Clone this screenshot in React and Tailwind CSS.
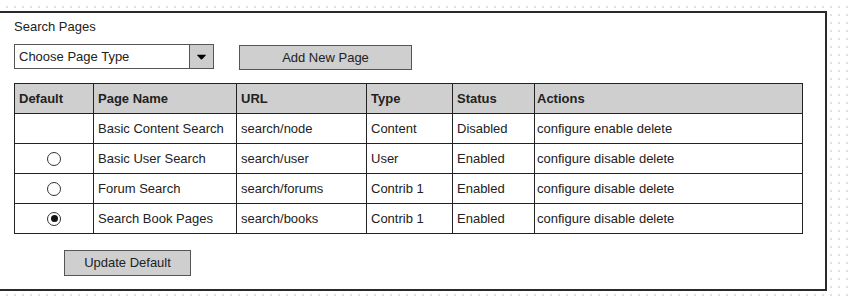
import { FaCaretDown } from "react-icons/fa";

const rows = [
    { radio: null, name: "Basic Content Search", url: "search/node", type: "Content", status: "Disabled", actions: "configure enable delete" },
    { radio: "off", name: "Basic User Search", url: "search/user", type: "User", status: "Enabled", actions: "configure disable delete" },
    { radio: "off", name: "Forum Search", url: "search/forums", type: "Contrib 1", status: "Enabled", actions: "configure disable delete" },
    { radio: "on", name: "Search Book Pages", url: "search/books", type: "Contrib 1", status: "Enabled", actions: "configure disable delete" },
];

const Radio = ({ checked }) => (
    <div className="mx-auto w-[14px] h-[14px] rounded-full border border-[#333] bg-white flex items-center justify-center">
        {checked && <div className="w-[7px] h-[7px] rounded-full bg-[#111]" />}
    </div>
);

const App = () => {
    return (
        <div className="w-[851px] h-[301px] overflow-hidden bg-white bg-[radial-gradient(#e0e0e0_0.9px,transparent_0.9px)] bg-[size:8px_8px] bg-[position:3px_3px] font-['Comic_Sans_MS','Liberation_Sans',sans-serif] text-[#222]">
            <div className="mt-[11px] w-[827px] h-[280px] bg-white border-t-2 border-r-2 border-b-2 border-[#2a2a2a] pl-[14px] pt-[6px]">
                <p className="text-[13px] leading-[16px]">Search Pages</p>

                <div className="mt-[9px] flex items-start">
                    <div className="w-[200px] h-[25px] flex border border-[#555] bg-white">
                        <div className="flex-1 flex items-center pl-[4px] text-[13px]">
                            Choose Page Type
                        </div>
                        <div className="w-[24px] border-l border-[#555] bg-[#cdcdcd] flex items-center justify-center">
                            <FaCaretDown className="text-[15px] text-black" />
                        </div>
                    </div>
                    <button className="ml-[25px] mt-[1px] w-[173px] h-[25px] border border-[#555] bg-[#cfcfcf] text-[13px]">
                        Add New Page
                    </button>
                </div>

                <table className="mt-[13px] w-[789px] border-collapse border border-[#222] text-[13px] text-left">
                    <thead>
                        <tr className="bg-[#cfcfcf] h-[30px]">
                            <th className="w-[79px] border border-[#222] px-[4px] font-bold">Default</th>
                            <th className="w-[143px] border border-[#222] px-[4px] font-bold">Page Name</th>
                            <th className="w-[130px] border border-[#222] px-[4px] font-bold">URL</th>
                            <th className="w-[86px] border border-[#222] px-[4px] font-bold">Type</th>
                            <th className="w-[82px] border border-[#222] px-[4px] font-bold">Status</th>
                            <th className="border border-[#222] px-[2px] font-bold">Actions</th>
                        </tr>
                    </thead>
                    <tbody>
                        {rows.map((r) => (
                            <tr key={r.name} className="h-[30px]">
                                <td className="border border-[#222]">
                                    {r.radio && <Radio checked={r.radio === "on"} />}
                                </td>
                                <td className="border border-[#222] px-[4px]">{r.name}</td>
                                <td className="border border-[#222] px-[4px]">{r.url}</td>
                                <td className="border border-[#222] px-[4px]">{r.type}</td>
                                <td className="border border-[#222] px-[4px]">{r.status}</td>
                                <td className="border border-[#222] px-[2px]">{r.actions}</td>
                            </tr>
                        ))}
                    </tbody>
                </table>

                <button className="mt-[16px] ml-[50px] w-[127px] h-[26px] border border-[#555] bg-[#cfcfcf] text-[13px]">
                    Update Default
                </button>
            </div>
        </div>
    );
};

export default App;
